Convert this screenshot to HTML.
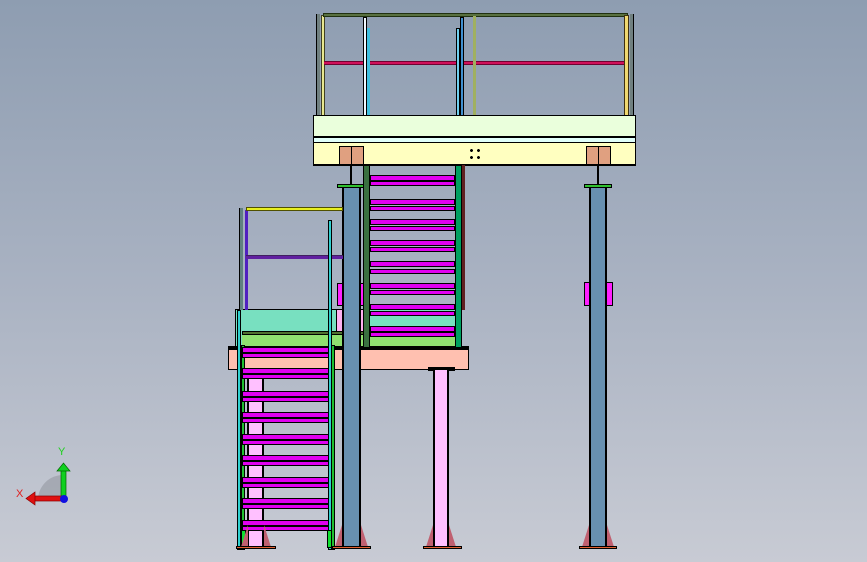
<!DOCTYPE html>
<html><head><meta charset="utf-8"><style>
body{margin:0}
#c{position:relative;width:867px;height:562px;overflow:hidden;background:linear-gradient(#8e9db1,#a9b2c2 50%,#c8cbd4);font-family:"Liberation Sans",sans-serif}
#c div{position:absolute;box-sizing:border-box}
.k{border:1px solid #000}
.t{background:#e000f0;border:1px solid #000;height:6px}
.g{width:0;height:0;border-bottom:22px solid #c06070}
</style></head><body><div id="c">

<!-- upper railing -->
<div style="left:316px;top:14px;width:4px;height:102px;background:#708080;border-left:1px solid #000"></div>
<div style="left:321px;top:15px;width:4px;height:101px;background:#e8e890;border:1px solid #404020"></div>
<div style="left:323px;top:13px;width:305px;height:4px;background:#587040;border:1px solid #203010"></div>
<div style="left:324px;top:61px;width:302px;height:4px;background:#d0105a;border-top:1px solid #700030;border-bottom:1px solid #700030"></div>
<div style="left:363px;top:17px;width:4px;height:99px;background:#f0f8ff;border:1px solid #000"></div>
<div style="left:367px;top:28px;width:3px;height:88px;background:#40c0e0"></div>
<div style="left:456px;top:28px;width:4px;height:88px;background:#70d0f0;border:1px solid #000"></div>
<div style="left:460px;top:17px;width:4px;height:99px;background:#4090d0;border:1px solid #000"></div>
<div style="left:473px;top:16px;width:3px;height:100px;background:#a0b060"></div>
<div style="left:624px;top:15px;width:5px;height:101px;background:#f0d870;border:1px solid #403010"></div>
<div style="left:630px;top:14px;width:4px;height:102px;background:#708080;border-right:1px solid #000"></div>

<!-- upper deck -->
<div class="k" style="left:313px;top:115px;width:323px;height:23px;background:#eaffdc;border-bottom:2px solid #000"></div>
<div style="left:313px;top:138px;width:323px;height:5px;background:#e0fffa;border-left:1px solid #000;border-right:1px solid #000;border-bottom:1px solid #000"></div>
<div class="k" style="left:313px;top:142px;width:323px;height:24px;background:#ffffc0;border-bottom:2px solid #000"></div>
<div class="k" style="left:339px;top:146px;width:13px;height:19px;background:#e0a080"></div>
<div class="k" style="left:351px;top:146px;width:13px;height:19px;background:#e0a080"></div>
<div class="k" style="left:586px;top:146px;width:13px;height:19px;background:#e0a080"></div>
<div class="k" style="left:598px;top:146px;width:13px;height:19px;background:#e0a080"></div>
<div style="left:468px;top:147px;width:14px;height:14px;border:0;background:radial-gradient(circle,#000 1.3px,transparent 1.6px) 0 0/7px 7px"></div>

<!-- column stems & caps -->
<div style="left:350px;top:166px;width:2px;height:18px;background:#000"></div>
<div style="left:597px;top:166px;width:2px;height:18px;background:#000"></div>
<div style="left:337px;top:184px;width:28px;height:4px;background:#30c030;border:1px solid #000"></div>
<div style="left:584px;top:184px;width:28px;height:4px;background:#30c030;border:1px solid #000"></div>

<!-- magenta plates on columns -->
<div class="k" style="left:337px;top:283px;width:30px;height:23px;background:#ff20ff"></div>
<div class="k" style="left:584px;top:282px;width:29px;height:24px;background:#ff20ff"></div>

<!-- middle platform -->
<div class="k" style="left:235px;top:309px;width:102px;height:39px;background:#78e0c0"></div>
<div class="k" style="left:367px;top:309px;width:90px;height:39px;background:#78e0c0"></div>
<div class="k" style="left:336px;top:309px;width:32px;height:39px;background:#ffb0f0"></div>
<div style="left:242px;top:331px;width:215px;height:4px;background:#507030;border:1px solid #000"></div>
<div style="left:242px;top:335px;width:215px;height:13px;background:#90e070"></div>
<div style="left:228px;top:346px;width:241px;height:3px;background:#000"></div>
<div class="k" style="left:228px;top:349px;width:241px;height:21px;background:#ffc0b0"></div>
<div style="left:428px;top:367px;width:27px;height:4px;background:#000"></div>

<!-- pink columns -->
<div class="k" style="left:433px;top:370px;width:16px;height:178px;background:#ffc0ff;border-width:0 2px"></div>
<div class="k" style="left:247px;top:370px;width:17px;height:178px;background:#ffc0ff;border-width:0 2px"></div>

<!-- blue columns -->
<div class="k" style="left:342px;top:188px;width:19px;height:360px;background:#6890b0;border-width:0 2px"></div>
<div class="k" style="left:589px;top:188px;width:18px;height:360px;background:#6890b0;border-width:0 2px"></div>

<!-- upper stairs -->
<div style="left:363px;top:165px;width:7px;height:183px;background:#3a7040;border:1px solid #000"></div>
<div style="left:455px;top:165px;width:7px;height:183px;background:#00a060;border:1px solid #000"></div>
<div style="left:462px;top:165px;width:3px;height:145px;background:#602020"></div>
<div class="t" style="left:370px;top:175px;width:85px"></div><div class="t" style="left:370px;top:181px;width:85px;height:5px"></div>
<div class="t" style="left:370px;top:199px;width:85px"></div><div class="t" style="left:370px;top:206px;width:85px;height:5px"></div>
<div class="t" style="left:370px;top:219px;width:85px"></div><div class="t" style="left:370px;top:226px;width:85px;height:5px"></div>
<div class="t" style="left:370px;top:240px;width:85px"></div><div class="t" style="left:370px;top:247px;width:85px;height:5px"></div>
<div class="t" style="left:370px;top:261px;width:85px"></div><div class="t" style="left:370px;top:269px;width:85px;height:5px"></div>
<div class="t" style="left:370px;top:283px;width:85px"></div><div class="t" style="left:370px;top:290px;width:85px;height:5px"></div>
<div class="t" style="left:370px;top:304px;width:85px"></div><div class="t" style="left:370px;top:311px;width:85px;height:5px"></div>
<div class="t" style="left:370px;top:326px;width:85px"></div><div class="t" style="left:370px;top:332px;width:85px;height:5px"></div>

<!-- left railing -->
<div style="left:239px;top:208px;width:4px;height:102px;background:#608080;border-left:1px solid #000"></div>
<div style="left:245px;top:210px;width:3px;height:100px;background:#5020c0"></div>
<div style="left:246px;top:207px;width:97px;height:4px;background:#e8f020;border:1px solid #505000"></div>
<div style="left:246px;top:255px;width:97px;height:4px;background:#6020a0;border-top:1px solid #402060"></div>
<div style="left:328px;top:220px;width:4px;height:330px;background:#30d0d0;border:1px solid #000"></div>
<div style="left:237px;top:310px;width:4px;height:240px;background:#30d0d0;border:1px solid #000"></div>

<!-- left stairs -->
<div style="left:241px;top:345px;width:4px;height:205px;background:#20c030;border:1px solid #000"></div>
<div style="left:331px;top:345px;width:4px;height:205px;background:#20c030;border:1px solid #000"></div>
<div style="left:241px;top:530px;width:5px;height:18px;background:#10e030;border:1px solid #000"></div>
<div style="left:327px;top:530px;width:5px;height:18px;background:#10e030;border:1px solid #000"></div>
<div class="t" style="left:242px;top:347px;width:87px"></div><div class="t" style="left:242px;top:353px;width:87px;height:5px"></div>
<div class="t" style="left:242px;top:368px;width:87px"></div><div class="t" style="left:242px;top:374px;width:87px;height:5px"></div>
<div class="t" style="left:242px;top:391px;width:87px"></div><div class="t" style="left:242px;top:397px;width:87px;height:5px"></div>
<div class="t" style="left:242px;top:412px;width:87px"></div><div class="t" style="left:242px;top:418px;width:87px;height:5px"></div>
<div class="t" style="left:242px;top:434px;width:87px"></div><div class="t" style="left:242px;top:440px;width:87px;height:5px"></div>
<div class="t" style="left:242px;top:455px;width:87px"></div><div class="t" style="left:242px;top:461px;width:87px;height:5px"></div>
<div class="t" style="left:242px;top:477px;width:87px"></div><div class="t" style="left:242px;top:483px;width:87px;height:5px"></div>
<div class="t" style="left:242px;top:498px;width:87px"></div><div class="t" style="left:242px;top:504px;width:87px;height:5px"></div>
<div class="t" style="left:242px;top:520px;width:87px"></div><div class="t" style="left:242px;top:526px;width:87px;height:5px"></div>

<!-- base gussets & plates -->
<div class="g" style="left:335px;top:525px;border-left:7px solid transparent"></div><div class="g" style="left:361px;top:525px;border-right:7px solid transparent"></div>
<div style="left:332px;top:546px;width:39px;height:3px;background:#e06030;border:1px solid #000"></div>
<div class="g" style="left:426px;top:525px;border-left:7px solid transparent"></div><div class="g" style="left:449px;top:525px;border-right:7px solid transparent"></div>
<div style="left:423px;top:546px;width:39px;height:3px;background:#e06030;border:1px solid #000"></div>
<div class="g" style="left:582px;top:525px;border-left:7px solid transparent"></div><div class="g" style="left:607px;top:525px;border-right:7px solid transparent"></div>
<div style="left:579px;top:546px;width:38px;height:3px;background:#e06030;border:1px solid #000"></div>
<div class="g" style="left:241px;top:525px;border-left:7px solid transparent"></div><div class="g" style="left:264px;top:525px;border-right:7px solid transparent"></div>
<div style="left:236px;top:546px;width:40px;height:3px;background:#e06030;border:1px solid #000"></div>

<!-- triad -->
<svg style="position:absolute;left:10px;top:440px" width="70" height="70">
<path d="M53 35 A25 25 0 0 0 28 60 L53 60 Z" fill="#9a9ea6" opacity=".7"/>
<rect x="51" y="30" width="5" height="28" fill="#10d020" stroke="#060" stroke-width=".7"/>
<path d="M47 31 L53.5 23 L60 31 Z" fill="#10d020" stroke="#060" stroke-width=".7"/>
<rect x="24" y="56" width="30" height="5" fill="#e01010" stroke="#800" stroke-width=".7"/>
<path d="M25 52 L16 58.5 L25 65 Z" fill="#e01010" stroke="#800" stroke-width=".7"/>
<circle cx="54" cy="59" r="4" fill="#1010e0"/>
<text x="48" y="15" font-size="11" fill="#20d020" font-family="Liberation Sans">Y</text>
<text x="6" y="57" font-size="11" fill="#e02020" font-family="Liberation Sans">X</text>
</svg>
</div></body></html>
